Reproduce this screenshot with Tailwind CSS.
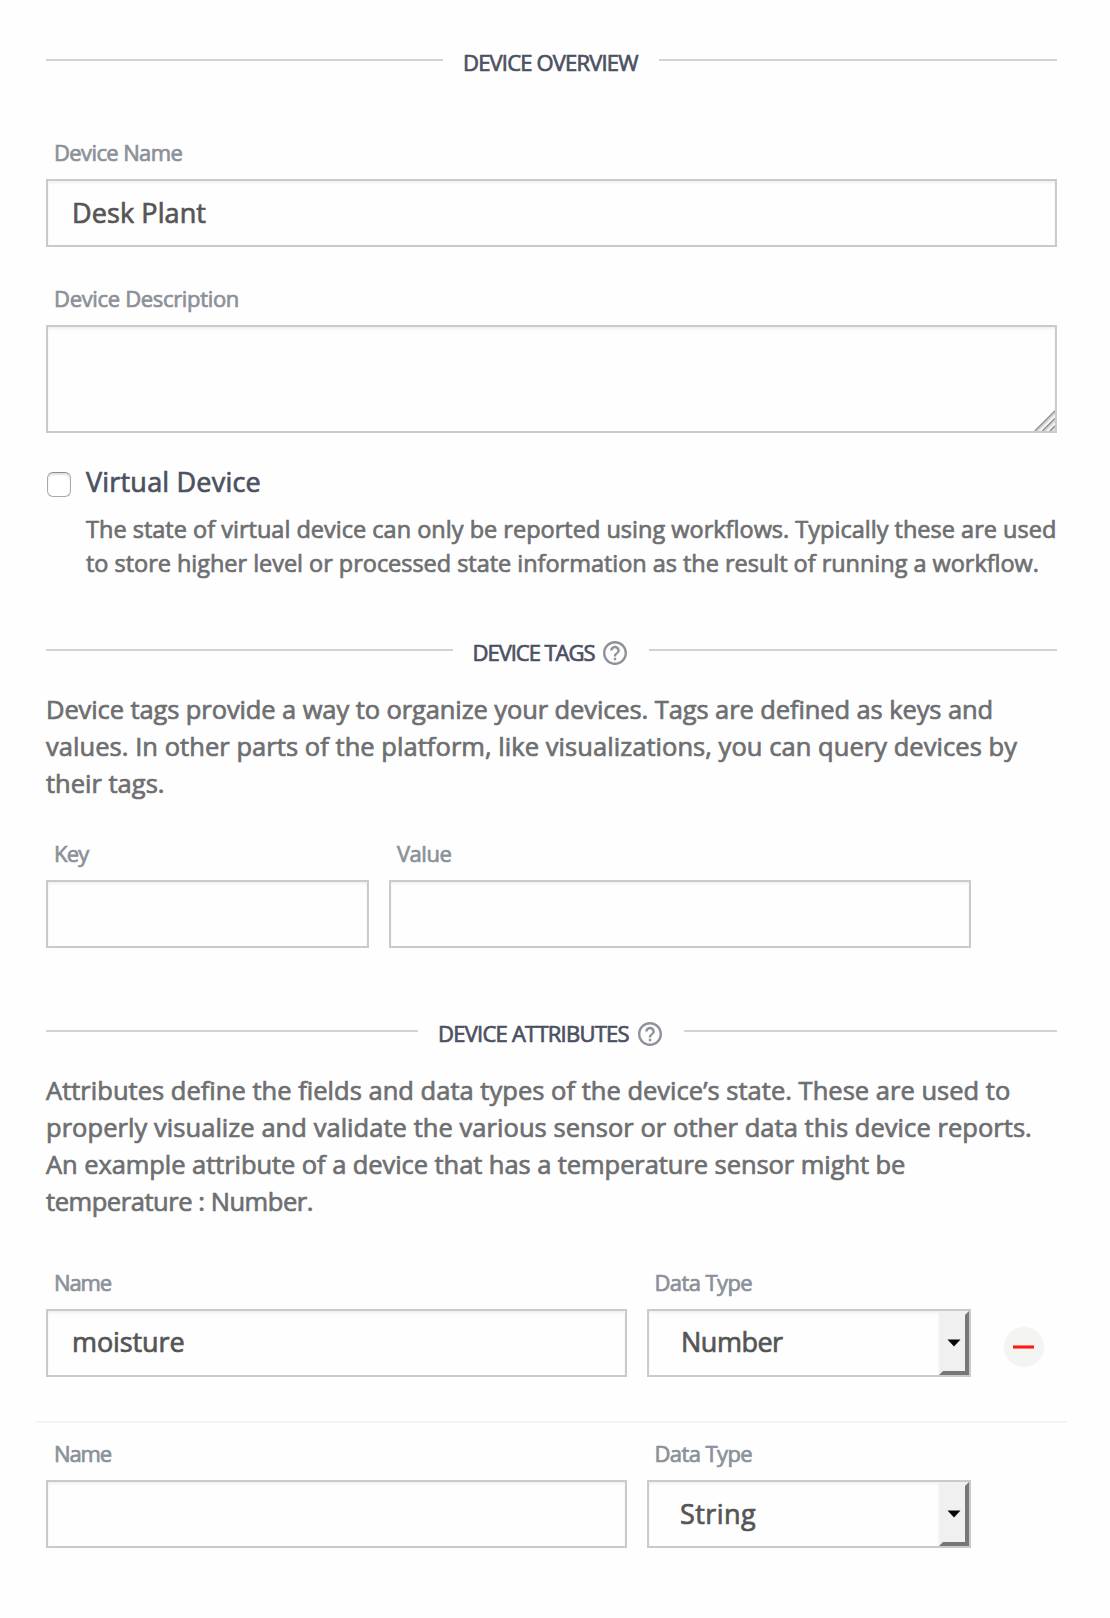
<!DOCTYPE html>
<html lang="en">
<head>
<meta charset="utf-8">
<title>Device</title>
<script src="https://cdn.jsdelivr.net/npm/@tailwindcss/browser@4"></script>
</head>
<body class="bg-[#fefefe] font-['Open_Sans','Noto_Sans',sans-serif] [-webkit-text-stroke:0.7px_currentColor]">
<main class="w-[1110px] h-[1618px] pl-[46px] pr-[53px] pt-[47px] overflow-hidden whitespace-nowrap">

  <!-- Device overview -->
  <header class="flex h-[30px] text-[22px] leading-[30px] text-[#4b5161]">
    <div class="flex-1 h-[2px] mt-3 bg-[#d2d3d2]"></div>
    <h2 class="w-[216px] pl-[20px] tracking-[-0.83px]">DEVICE OVERVIEW</h2>
    <div class="w-[398px] h-[2px] mt-3 bg-[#d2d3d2]"></div>
  </header>

  <div class="mt-[60px]">
    <div class="h-[42px] pl-2 text-[22px] leading-[30px] text-[#8b9199] tracking-[-0.62px]">Device Name</div>
    <div class="h-[68px] border-2 border-[#cacaca] shadow-[inset_0_2px_3px_rgba(0,0,0,0.06)] pl-6 text-[27px] leading-[64px] text-[#555555] tracking-[0.1px]">Desk Plant</div>
  </div>

  <div class="mt-9">
    <div class="h-[42px] pl-2 text-[22px] leading-[30px] text-[#8b9199] tracking-[-0.33px]">Device Description</div>
    <div class="h-[108px] border-2 border-[#cacaca] shadow-[inset_0_2px_3px_rgba(0,0,0,0.06)] flex justify-end items-end">
      <svg class="w-[22px] h-[22px]" viewBox="0 0 22 22" fill="none" stroke-width="1.5">
        <path d="M0 22L22 0V22Z" fill="#f1f1f1"/>
        <path d="M2 22L22 2M9.500 22L22 9.500M17 22L22 17" stroke="#8d8d8d"/>
        <path d="M4 22L22 4M11.500 22L22 11.500M19 22L22 19" stroke="#d0d0d0"/>
      </svg>
    </div>
  </div>

  <div class="flex mt-[30px]">
    <div class="ml-[1px] mt-[9px] w-6 h-[25px] rounded-[6px] border border-[#a9a9ab] border-t-[#8e8e92] bg-white shadow-[inset_0_2px_2px_rgba(0,0,0,0.13)]"></div>
    <div class="pl-[15px]">
      <div class="text-[27px] leading-[37px] text-[#4b5161] tracking-[0.2px]">Virtual Device</div>
      <p class="mt-3 text-[23.5px] leading-[34px] text-[#6e6f71]"><span class="tracking-[0.01px]">The state of virtual device can only be reported using workflows. Typically these are used</span><br><span class="tracking-[-0.03px]">to store higher level or processed state information as the result of running a workflow.</span></p>
    </div>
  </div>

  <!-- Device tags -->
  <header class="flex h-[30px] mt-[57px] text-[22px] leading-[30px] text-[#4b5161]">
    <div class="flex-1 h-[2px] mt-3 bg-[#d2d3d2]"></div>
    <div class="w-[196px] pl-[19.5px] pr-[22px] flex justify-between">
      <h2 class="tracking-[-1.03px]">DEVICE TAGS</h2>
      <svg class="w-6 h-6 mt-1 shrink-0" viewBox="2 2 20 20" fill="#8d919b"><path d="M11 18h2v-2h-2v2zm1-16C6.480 2 2 6.480 2 12s4.480 10 10 10 10-4.480 10-10S17.520 2 12 2zm0 18c-4.410 0-8-3.590-8-8s3.590-8 8-8 8 3.590 8 8-3.590 8-8 8zm0-14c-2.210 0-4 1.790-4 4h2c0-1.100.900-2 2-2s2 .900 2 2c0 2-3 1.750-3 5h2c0-2.250 3-2.500 3-5 0-2.210-1.790-4-4-4z"/></svg>
    </div>
    <div class="w-[408px] h-[2px] mt-3 bg-[#d2d3d2]"></div>
  </header>

  <p class="mt-6 text-[25.5px] leading-[37px] text-[#6e6f71]"><span class="tracking-[-0.1px]">Device tags provide a way to organize your devices. Tags are defined as keys and</span><br><span class="tracking-[0.05px]">values. In other parts of the platform, like visualizations, you can query devices by</span><br><span>their tags.</span></p>

  <div class="mt-9 flex gap-5">
    <div class="w-[323px]">
      <div class="h-[42px] pl-2 text-[22px] leading-[30px] text-[#8b9199] tracking-[-0.8px]">Key</div>
      <div class="h-[68px] border-2 border-[#cacaca] shadow-[inset_0_2px_3px_rgba(0,0,0,0.06)]"></div>
    </div>
    <div class="w-[582px]">
      <div class="h-[42px] pl-2 text-[22px] leading-[30px] text-[#8b9199] tracking-[-0.5px]">Value</div>
      <div class="h-[68px] border-2 border-[#cacaca] shadow-[inset_0_2px_3px_rgba(0,0,0,0.06)]"></div>
    </div>
  </div>

  <!-- Device attributes -->
  <header class="flex h-[30px] mt-[70px] text-[22px] leading-[30px] text-[#4b5161]">
    <div class="flex-1 h-[2px] mt-3 bg-[#d2d3d2]"></div>
    <div class="w-[266px] pl-[20px] pr-[22px] flex justify-between">
      <h2 class="tracking-[-0.76px]">DEVICE ATTRIBUTES</h2>
      <svg class="w-6 h-6 mt-1 shrink-0" viewBox="2 2 20 20" fill="#8d919b"><path d="M11 18h2v-2h-2v2zm1-16C6.480 2 2 6.480 2 12s4.480 10 10 10 10-4.480 10-10S17.520 2 12 2zm0 18c-4.410 0-8-3.590-8-8s3.590-8 8-8 8 3.590 8 8-3.590 8-8 8zm0-14c-2.210 0-4 1.790-4 4h2c0-1.100.900-2 2-2s2 .900 2 2c0 2-3 1.750-3 5h2c0-2.250 3-2.500 3-5 0-2.210-1.790-4-4-4z"/></svg>
    </div>
    <div class="w-[373px] h-[2px] mt-3 bg-[#d2d3d2]"></div>
  </header>

  <p class="mt-6 text-[25.5px] leading-[37px] text-[#6e6f71]"><span class="tracking-[0.02px]">Attributes define the fields and data types of the device’s state. These are used to</span><br><span class="tracking-[0.05px]">properly visualize and validate the various sensor or other data this device reports.</span><br><span class="tracking-[-0.07px]">An example attribute of a device that has a temperature sensor might be</span><br><span class="tracking-[-0.45px]">temperature : Number.</span></p>

  <div class="mt-[47px] flex">
    <div class="w-[581px]">
      <div class="h-[42px] pl-2 text-[22px] leading-[30px] text-[#8b9199] tracking-[-1.1px]">Name</div>
      <div class="h-[68px] border-2 border-[#cacaca] shadow-[inset_0_2px_3px_rgba(0,0,0,0.06)] pl-6 text-[27px] leading-[62px] text-[#555555] tracking-[-0.1px]">moisture</div>
    </div>
    <div class="w-[324px] ml-5">
      <div class="h-[42px] pl-[7.5px] text-[22px] leading-[30px] text-[#8b9199] tracking-[-0.6px]">Data Type</div>
      <div class="h-[68px] border-2 border-[#cacaca] flex">
        <div class="flex-1 pl-[32px] shadow-[inset_0_2px_3px_rgba(0,0,0,0.06)] text-[27px] leading-[62px] text-[#555555] tracking-[-0.5px]">Number</div>
        <div class="w-[30px] h-16 bg-[#f0f0f0] border-4 border-t-[#f0f0f0] border-l-[#f0f0f0] border-r-[#777777] border-b-[#777777] flex justify-center">
          <svg class="w-[14px] h-[8px] mt-6 shrink-0" viewBox="0 0 14 8"><path d="M0.500 0.500H13.500L7 7.500Z" fill="#050505"/></svg>
        </div>
      </div>
    </div>
    <div class="ml-[33px] mt-[60px] size-10 rounded-full bg-[#f4f4f2] flex items-center pl-[9px]">
      <div class="w-[21px] h-[4px] bg-[#ff1a12] border-y border-[#ff7a74]"></div>
    </div>
  </div>

  <div class="h-[2px] mt-[44px] -ml-[10px] -mr-[10px] bg-[#f3f3f3]"></div>

  <div class="mt-[15px] flex">
    <div class="w-[581px]">
      <div class="h-[42px] pl-2 text-[22px] leading-[30px] text-[#8b9199] tracking-[-1.1px]">Name</div>
      <div class="h-[68px] border-2 border-[#cacaca] shadow-[inset_0_2px_3px_rgba(0,0,0,0.06)]"></div>
    </div>
    <div class="w-[324px] ml-5">
      <div class="h-[42px] pl-[7.5px] text-[22px] leading-[30px] text-[#8b9199] tracking-[-0.6px]">Data Type</div>
      <div class="h-[68px] border-2 border-[#cacaca] flex">
        <div class="flex-1 pl-[31px] shadow-[inset_0_2px_3px_rgba(0,0,0,0.06)] text-[27px] leading-[64px] text-[#555555] tracking-[0.45px]">String</div>
        <div class="w-[30px] h-16 bg-[#f0f0f0] border-4 border-t-[#f0f0f0] border-l-[#f0f0f0] border-r-[#777777] border-b-[#777777] flex justify-center">
          <svg class="w-[14px] h-[8px] mt-6 shrink-0" viewBox="0 0 14 8"><path d="M0.500 0.500H13.500L7 7.500Z" fill="#050505"/></svg>
        </div>
      </div>
    </div>
  </div>
</main>
</body>
</html>
